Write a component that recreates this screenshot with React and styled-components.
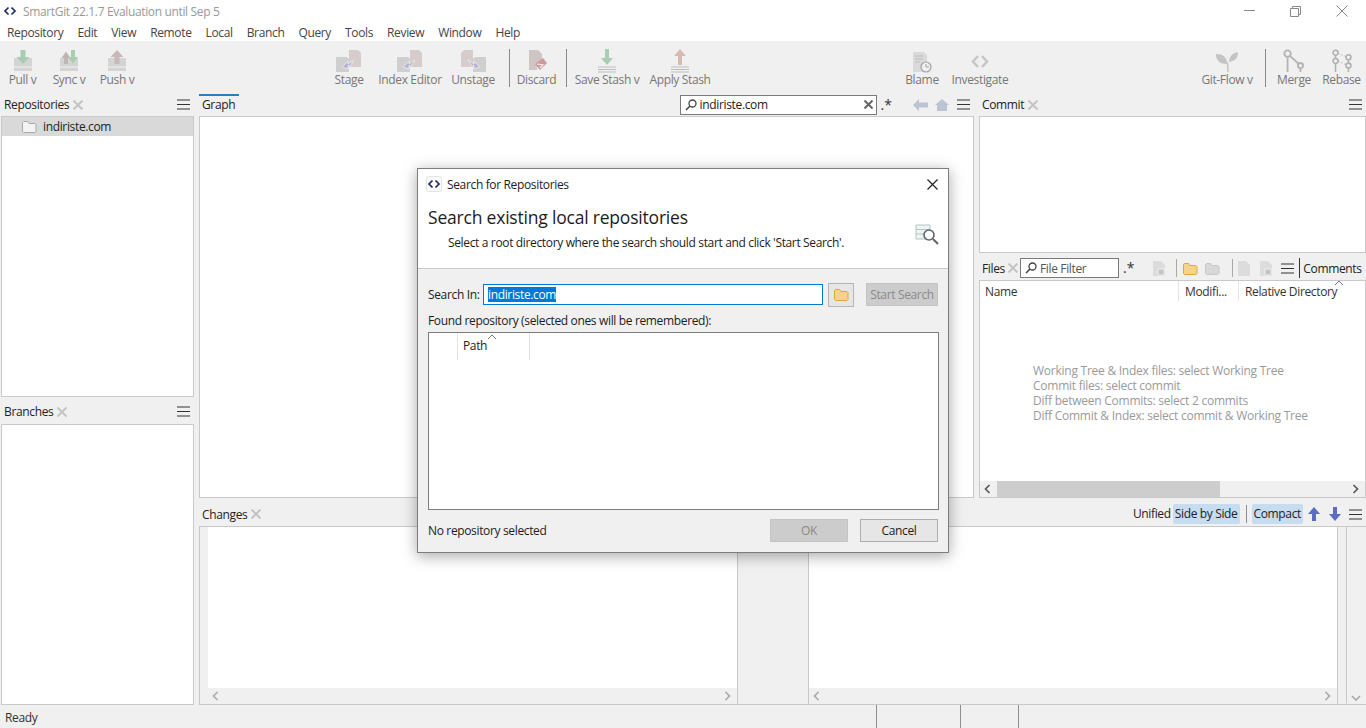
import React from 'react';
import styled, { createGlobalStyle } from 'styled-components';

const FONT = '"Open Sans", "Noto Sans", "Liberation Sans", sans-serif';

const GlobalStyle = createGlobalStyle`
  html, body { margin: 0; padding: 0; height: 100%; overflow: hidden; }
  body { font-family: ${FONT}; font-size: 12px; color: #1a1a1a; background: #f0f0f0; }
  * { box-sizing: border-box; }
`;

const Page = styled.div`
  position: relative;
  width: 1366px;
  height: 728px;
  display: flex;
  flex-direction: column;
  overflow: hidden;
  letter-spacing: -0.35px;
`;

/* title + menu */
const TitleBar = styled.div`
  height: 22px;
  background: #fff;
  display: flex;
  align-items: center;
  padding-left: 2px;
  color: #999;
`;
const TitleText = styled.span`
  margin-left: 5px;
`;
const WindowButtons = styled.div`
  margin-left: auto;
  display: flex;
  align-items: center;
  padding-right: 18px;
  gap: 35px;
`;
const MenuBar = styled.div`
  height: 19px;
  background: #fff;
  display: flex;
  align-items: center;
  padding: 2px 0 0 7px;
  gap: 14px;
  color: #444;
`;

/* toolbar */
const Toolbar = styled.div`
  height: 53px;
  background: #f0f0f0;
  display: flex;
  align-items: flex-start;
  padding-top: 8px;
`;
const ToolGroup = styled.div`
  display: flex;
  align-items: flex-start;
  margin-left: ${(p) => p.$ml || 0}px;
`;
const ToolButton = styled.div`
  width: ${(p) => p.$w}px;
  display: flex;
  flex-direction: column;
  align-items: center;
  color: #777;
  white-space: nowrap;
  svg { display: block; height: 24px; }
  span { margin-top: -2px; line-height: 17px; }
`;
const ToolSep = styled.div`
  width: 1px;
  height: 38px;
  margin: 0 ${(p) => p.$r || 0}px 0 ${(p) => p.$l || 0}px;
  background: #8a8a8a;
`;

/* workspace */
const Main = styled.div`
  flex: 1;
  min-height: 0;
  display: flex;
`;
const LeftColumn = styled.div`
  width: 199px;
  padding: 0 5px 0 1px;
  display: flex;
  flex-direction: column;
`;
const RightArea = styled.div`
  flex: 1;
  min-width: 0;
  display: flex;
  flex-direction: column;
`;
const TopRow = styled.div`
  height: 409px;
  flex: none;
  display: flex;
`;
const CenterColumn = styled.div`
  width: 775px;
  display: flex;
  flex-direction: column;
  padding-bottom: 5px;
`;
const SideColumn = styled.div`
  margin-left: 5px;
  flex: 1;
  min-width: 0;
  display: flex;
  flex-direction: column;
  padding-bottom: 5px;
`;
const PaneHeader = styled.div`
  height: ${(p) => p.$h || 22}px;
  flex: none;
  display: flex;
  align-items: center;
  padding: 0 4px ${(p) => (p.$flat ? 0 : 1)}px 3px;
  margin-top: ${(p) => p.$mt || 0}px;
  color: #222;
  position: relative;
`;
const ActiveMark = styled.div`
  position: absolute;
  left: 0;
  top: 0;
  width: 40px;
  height: 2px;
  background: #2e7cb8;
`;
const HeaderRight = styled.div`
  margin-left: auto;
  display: flex;
  align-items: center;
`;
const Box = styled.div`
  background: #fff;
  border: 1px solid #c9c9c9;
  flex: ${(p) => (p.$h ? 'none' : 1)};
  height: ${(p) => (p.$h ? `${p.$h}px` : 'auto')};
  min-height: 0;
  position: relative;
`;
const RepoRow = styled.div`
  height: 19px;
  background: #d9d9d9;
  display: flex;
  align-items: center;
  padding-left: 20px;
  gap: 6px;
  color: #222;
`;
const SearchField = styled.div`
  width: ${(p) => p.$w}px;
  height: 20px;
  flex: none;
  background: #fff;
  border: 1px solid #7a7a7a;
  display: flex;
  align-items: center;
  padding: 0 3px 0 4px;
  gap: 3px;
  color: ${(p) => (p.$muted ? '#555' : '#1a1a1a')};
`;
const RegexMark = styled.span`
  font-size: 14px;
  line-height: 14px;
  color: #333;
  margin: 0 ${(p) => p.$r}px 0 ${(p) => p.$l}px;
  letter-spacing: 0;
`;
const FieldClose = styled.span`
  margin-left: auto;
  display: flex;
`;
const IconSlot = styled.span`
  display: flex;
  margin-left: ${(p) => p.$ml || 0}px;
`;
const ThinSep = styled.span`
  width: 1px;
  height: ${(p) => p.$h || 18}px;
  background: ${(p) => p.$c || '#a8a8a8'};
  margin-left: ${(p) => p.$ml || 0}px;
`;

/* files table */
const FilesHead = styled.div`
  display: grid;
  grid-template-columns: 199px 60px 1fr;
  height: 20px;
  position: relative;
`;
const HeadCell = styled.div`
  padding-left: ${(p) => p.$pl || 6}px;
  border-right: ${(p) => (p.$last ? 0 : 1)}px solid #e5e5e5;
  white-space: nowrap;
  overflow: hidden;
  color: #333;
  line-height: 21px;
`;
const SortCaret = styled.span`
  position: absolute;
  right: ${(p) => p.$r}px;
  top: ${(p) => p.$t}px;
  display: flex;
`;
const HintBlock = styled.div`
  position: absolute;
  left: 53px;
  top: 82px;
  color: #9a9a9a;
  line-height: 15px;
  letter-spacing: -0.25px;
`;
const HScroll = styled.div`
  display: flex;
  align-items: center;
  height: 16px;
  background: #f0f0f0;
  position: ${(p) => (p.$overlay ? 'absolute' : 'static')};
  left: 0;
  right: 0;
  bottom: 0;
`;
const ScrollTrack = styled.div`
  flex: 1;
  height: 100%;
`;
const ScrollThumb = styled.div`
  width: ${(p) => p.$w}px;
  height: 100%;
  margin-left: ${(p) => p.$l}px;
  background: #cdcdcd;
`;
const Arrow = styled.span`
  width: 17px;
  flex: none;
  display: flex;
  justify-content: center;
`;

/* changes */
const ChangesBody = styled.div`
  flex: 1;
  min-height: 0;
  display: flex;
  border-top: 1px solid #c9c9c9;
  border-bottom: 1px solid #c9c9c9;
  background: #f0f0f0;
`;
const Gutter = styled.div`
  width: ${(p) => p.$w}px;
  flex: none;
  border-left: 1px solid #c9c9c9;
  display: flex;
  flex-direction: column;
  justify-content: flex-end;
  align-items: center;
`;
const DiffPane = styled.div`
  width: ${(p) => p.$w}px;
  flex: none;
  display: flex;
  flex-direction: column;
`;
const DiffWhite = styled.div`
  flex: 1;
  background: #fff;
`;
const DiffGap = styled.div`
  width: 72px;
  flex: none;
  border-left: 1px solid #c9c9c9;
  border-right: 1px solid #c9c9c9;
`;
const ModeLabel = styled.span`
  padding: 0 2px;
  height: 20px;
  line-height: 20px;
  border-radius: 2px;
  background: ${(p) => (p.$on ? '#c6dcf0' : 'transparent')};
  color: #222;
  margin-left: ${(p) => p.$ml || 0}px;
  white-space: nowrap;
`;

/* status */
const StatusBar = styled.div`
  height: 23px;
  flex: none;
  display: flex;
  align-items: stretch;
  padding-left: 5px;
  color: #333;
`;
const StatusText = styled.div`
  width: 871px;
  line-height: 26px;
`;
const StatusCell = styled.div`
  width: ${(p) => p.$w}px;
  border-left: 1px solid #8f8f8f;
`;

/* dialog */
const Dialog = styled.div`
  position: absolute;
  left: 417px;
  top: 168px;
  width: 532px;
  height: 385px;
  background: #f0f0f0;
  border: 1px solid #7d7d7d;
  box-shadow: 0 3px 14px rgba(0, 0, 0, 0.35);
  display: flex;
  flex-direction: column;
  color: #1c1c1c;
`;
const DialogTop = styled.div`
  height: 100px;
  flex: none;
  background: #fff;
  border-bottom: 1px solid #c8c8c8;
  position: relative;
  padding: 0 10px;
`;
const DialogTitle = styled.div`
  height: 30px;
  display: flex;
  align-items: center;
  gap: 5px;
  margin-left: -2px;
`;
const DialogClose = styled.span`
  margin-left: auto;
  display: flex;
`;
const Heading = styled.div`
  font-size: 17.5px;
  line-height: 24px;
  margin-top: 6px;
  letter-spacing: -0.2px;
`;
const SubHeading = styled.div`
  margin: 5px 0 0 20px;
  line-height: 17px;
`;
const TopIcon = styled.span`
  position: absolute;
  right: 9px;
  top: 55px;
  display: flex;
`;
const DialogBody = styled.div`
  flex: 1;
  min-height: 0;
  display: flex;
  flex-direction: column;
  padding: 13px 9px 10px 10px;
`;
const SearchRow = styled.div`
  display: flex;
  align-items: center;
  height: 25px;
  flex: none;
`;
const RowLabel = styled.span`
  width: 55px;
  flex: none;
`;
const PathInput = styled.div`
  width: 340px;
  height: 21px;
  border: 1px solid #0078d7;
  background: #fff;
  display: flex;
  align-items: center;
  padding-left: 4px;
  flex: none;
`;
const Selected = styled.span`
  background: #0078d7;
  color: #fff;
  line-height: 15px;
`;
const FolderButton = styled.div`
  width: 26px;
  height: 24px;
  margin-left: 5px;
  border: 1px solid #b5b5b5;
  background: #e6e6e6;
  display: flex;
  align-items: center;
  justify-content: center;
`;
const DialogButton = styled.div`
  width: ${(p) => p.$w}px;
  height: 23px;
  display: flex;
  align-items: center;
  justify-content: center;
  flex: none;
  margin-left: ${(p) => p.$ml || 0}px;
  background: ${(p) => (p.$disabled ? '#cccccc' : '#e6e6e6')};
  border: 1px solid ${(p) => (p.$disabled ? '#c4c4c4' : '#adadad')};
  color: ${(p) => (p.$disabled ? '#8a8a8a' : '#1c1c1c')};
`;
const FoundLabel = styled.div`
  margin-top: 5px;
  line-height: 17px;
`;
const ResultTable = styled.div`
  margin-top: 3px;
  height: 178px;
  flex: none;
  background: #fff;
  border: 1px solid #7d7d7d;
  position: relative;
`;
const ResultHead = styled.div`
  display: grid;
  grid-template-columns: 29px 72px;
  height: 27px;
`;
const ResultCell = styled.div`
  border-right: 1px solid #e3e3e3;
  padding-left: 5px;
  line-height: 26px;
`;
const DialogFooter = styled.div`
  display: flex;
  align-items: center;
  margin: 9px 1px 0 0;
  height: 23px;
  flex: none;
`;
const FooterText = styled.span`
  margin-right: auto;
`;

/* icons */
const Svg = ({ w, h, children, ...rest }) => (
  <svg width={w} height={h} viewBox={`0 0 ${w} ${h}`} fill="none" {...rest}>
    {children}
  </svg>
);

const AppLogo = ({ boxed }) => (
  <Svg w={16} h={16}>
    {boxed && <rect x="0.5" y="0.5" width="15" height="15" rx="2" fill="#fafafa" stroke="#e4e4e4" />}
    <path d="M6.5 4.5 3 8l3.5 3.5M9.5 4.5 13 8l-3.5 3.5" stroke="#1f2a60" strokeWidth="1.7" />
  </Svg>
);
const CloseX = ({ s = 10, c = '#c4c4c4', sw = 2 }) => (
  <Svg w={s} h={s}>
    <path d={`M0.5 0.5 ${s - 0.5} ${s - 0.5}M${s - 0.5} 0.5 0.5 ${s - 0.5}`} stroke={c} strokeWidth={sw} />
  </Svg>
);
const Burger = () => (
  <Svg w={13} h={11}>
    <path d="M0 1h13M0 5.500h13M0 10h13" stroke="#333" strokeWidth="1" />
  </Svg>
);
const Lens = () => (
  <Svg w={12} h={12}>
    <circle cx="7.500" cy="4.500" r="3.500" stroke="#444" strokeWidth="1.300" />
    <path d="M5 7 1 11" stroke="#444" strokeWidth="1.600" />
  </Svg>
);
const Folder = ({ c = '#f5d489', s = '#d9a93f', w = 15, h = 13 }) => (
  <Svg w={w} h={h}>
    <path d={`M0.5 ${h - 1.5}V2.5l1-1h4l1.5 2h${w - 9}l1 1v${h - 6}l-1 1H1.5z`} fill={c} stroke={s} />
  </Svg>
);
const Chevron = ({ dir, c = '#a9a9a9' }) => {
  const d = {
    left: 'M5.500 1 1.500 5l4 4',
    right: 'M1.500 1l4 4-4 4',
    up: 'M1 6l4-4 4 4',
    down: 'M1 2l4 4 4-4',
  }[dir];
  return (
    <Svg w={10} h={10}>
      <path d={d} stroke={c} strokeWidth="1.600" />
    </Svg>
  );
};
const Caret = () => (
  <Svg w={10} h={6}>
    <path d="M1 5 5 1l4 4" stroke="#777" strokeWidth="1" />
  </Svg>
);

const Tray = ({ children }) => (
  <Svg w={28} h={24}>
    <path d="M5 9h18v13H5z" fill="#d4d4d4" />
    <path d="M5 18h18" stroke="#f0f0f0" />
    {children}
  </Svg>
);
const PullIcon = () => (
  <Tray>
    <path d="M11.500 1h5v7h4l-6.500 7-6.500-7h4z" fill="#a9cdb0" />
  </Tray>
);
const SyncIcon = () => (
  <Tray>
    <path d="M6.500 9l4.500-6.500L15.500 9h-2.500v6H9V9z" fill="#c2b4b4" />
    <path d="M16 1h4v7h3l-5 6.500L13 8h3z" fill="#a9cdb0" />
  </Tray>
);
const PushIcon = () => (
  <Tray>
    <path d="M14 1l6.500 7h-4v7h-5V8h-4z" fill="#c9b8b8" />
  </Tray>
);
const DocPair = ({ arrow, flip }) => (
  <Svg w={28} h={24} style={flip ? { transform: 'scaleX(-1)' } : undefined}>
    <path d="M1 8h11l2 2v13H1z" fill="#cfcfcf" />
    <path d="M14 1h9l3 3v14H14z" fill="#d6cccc" />
    <path d="M7 18l6-6v3l6-4-5 8v-3l-1 1v3z" fill={arrow} stroke="#f0f0f0" strokeWidth="0.800" />
  </Svg>
);
const DiscardIcon = () => (
  <Svg w={24} h={24}>
    <path d="M4 1h9l4 4v7l-5 5v4H4z" fill="#cfc5c5" />
    <path d="M10 15l8-6 4 5-7 7z" fill="#d09a9a" />
    <path d="M12 15l6 1-3 3" stroke="#f0f0f0" strokeWidth="1.200" />
  </Svg>
);
const SaveStashIcon = () => (
  <Svg w={24} h={24}>
    <path d="M10 0h4v9h4l-6 7-6-7h4z" fill="#a9cdb0" />
    <path d="M3 18h18M3 20.500h18M3 23h18" stroke="#bdbdbd" />
  </Svg>
);
const ApplyStashIcon = () => (
  <Svg w={24} h={24}>
    <path d="M12 0l6 7h-4v9h-4V7H6z" fill="#d6bcae" />
    <path d="M3 18h18M3 20.500h18M3 23h18" stroke="#bdbdbd" />
  </Svg>
);
const BlameIcon = () => (
  <Svg w={24} h={24}>
    <path d="M3 3h11l3 3v17H3z" fill="#dadada" />
    <path d="M5 7h8M5 10h8M5 13h5" stroke="#bcbcbc" />
    <circle cx="16" cy="18" r="5" fill="#efefef" stroke="#a3a3a3" strokeWidth="1.200" />
    <path d="M16 15v3h3" stroke="#a3a3a3" />
  </Svg>
);
const InvestigateIcon = () => (
  <Svg w={24} h={24}>
    <path d="M10 7 5 12.500l5 5.500M14 7l5 5.500-5 5.500" stroke="#c6c6c6" strokeWidth="2.600" />
    <path d="M9.500 12.500h1" stroke="#c6c6c6" />
  </Svg>
);
const GitFlowIcon = () => (
  <Svg w={24} h={24}>
    <path d="M1 5c7 0 11 3 11 10-7 0-11-3-11-10z" fill="#c4c4c4" />
    <path d="M14 13c0-5 3-9 9-10 0 6-3 9-9 10z" fill="#c4c4c4" />
    <path d="M12 13c1 3 1 7 1 10" stroke="#c4c4c4" strokeWidth="1.500" />
  </Svg>
);
const MergeIcon = () => (
  <Svg w={26} h={26}>
    <circle cx="6" cy="5" r="3.500" stroke="#b4b4b4" strokeWidth="2" />
    <circle cx="20" cy="18" r="2.800" stroke="#b4b4b4" strokeWidth="2" />
    <path d="M6 9v16M8.500 7.500 18 16M20 21v4" stroke="#b4b4b4" strokeWidth="2" />
  </Svg>
);
const RebaseIcon = () => (
  <Svg w={26} h={26}>
    <circle cx="6" cy="4" r="2.700" stroke="#b0b0b0" strokeWidth="1.700" />
    <circle cx="6" cy="13" r="2.700" stroke="#b0b0b0" strokeWidth="1.700" />
    <circle cx="20" cy="9" r="2.700" stroke="#b0b0b0" strokeWidth="1.700" />
    <circle cx="20" cy="18" r="2.700" stroke="#b0b0b0" strokeWidth="1.700" />
    <path d="M6 7v3M6 16v9M20 12v3M20 21v4" stroke="#b0b0b0" strokeWidth="1.700" />
    <path d="M9 5l8 3M9 13l8 4" stroke="#b0b0b0" strokeDasharray="1.500 2" />
  </Svg>
);
const BackIcon = () => (
  <Svg w={15} h={12}>
    <path d="M0 6l6-6v3.500h9v5H6V12z" fill="#bcc4d4" />
  </Svg>
);
const HomeIcon = () => (
  <Svg w={14} h={12}>
    <path d="M7 0l7 6h-2v6H2V6H0z" fill="#bcc4d4" />
  </Svg>
);
const VArrow = ({ up }) => (
  <Svg w={12} h={14} style={up ? undefined : { transform: 'scaleY(-1)' }}>
    <path d="M6 0l6 7H8v7H4V7H0z" fill="#5a6cc4" />
  </Svg>
);
const SearchDocIcon = () => (
  <Svg w={24} h={22}>
    <path d="M1 1h14v14H1z" fill="#eef4f2" stroke="#b4c6c4" />
    <path d="M1 5.500h14M1 10h14" stroke="#b4c6c4" />
    <circle cx="14" cy="11" r="5" fill="#fff" stroke="#5e6468" strokeWidth="1.600" />
    <path d="M18 15l5 5" stroke="#5e6468" strokeWidth="2" />
  </Svg>
);
const SmallDoc = ({ c = '#dcdcdc', badge }) => (
  <Svg w={12} h={15}>
    <path d="M0 0h8l4 4v11H0z" fill={c} />
    {badge && <rect x="5" y="8" width="6" height="6" fill="#c4c4c4" stroke="#efefef" />}
  </Svg>
);

const menus = ['Repository', 'Edit', 'View', 'Remote', 'Local', 'Branch', 'Query', 'Tools', 'Review', 'Window', 'Help'];
const hints = [
  'Working Tree & Index files: select Working Tree',
  'Commit files: select commit',
  'Diff between Commits: select 2 commits',
  'Diff Commit & Index: select commit & Working Tree',
];

const Tool = ({ w, label, children }) => (
  <ToolButton $w={w}>
    {children}
    <span>{label}</span>
  </ToolButton>
);

const DiffScroll = () => (
  <HScroll>
    <Arrow><Chevron dir="left" /></Arrow>
    <ScrollTrack />
    <Arrow><Chevron dir="right" /></Arrow>
  </HScroll>
);

const App = () => {
  return (
    <Page>
      <GlobalStyle />
      <TitleBar>
        <AppLogo />
        <TitleText>SmartGit 22.1.7 Evaluation until Sep 5</TitleText>
        <WindowButtons>
          <Svg w={11} h={2}><path d="M0 .5h11" stroke="#888" /></Svg>
          <Svg w={11} h={11}>
            <path d="M.5 2.500h8v8h-8zM2.500 2.500v-2h8v8h-2" stroke="#888" />
          </Svg>
          <Svg w={12} h={12}><path d="M.5.500l11 11M11.500.500l-11 11" stroke="#888" /></Svg>
        </WindowButtons>
      </TitleBar>
      <MenuBar>
        {menus.map((m) => (
          <span key={m}>{m}</span>
        ))}
      </MenuBar>

      <Toolbar>
        <ToolGroup>
          <Tool w={45} label="Pull v"><PullIcon /></Tool>
          <Tool w={48} label="Sync v"><SyncIcon /></Tool>
          <Tool w={48} label="Push v"><PushIcon /></Tool>
        </ToolGroup>
        <ToolGroup $ml={183}>
          <Tool w={50} label="Stage"><DocPair arrow="#b9b4d2" /></Tool>
          <Tool w={72} label="Index Editor"><DocPair arrow="#b9b4d2" /></Tool>
          <Tool w={54} label="Unstage"><DocPair arrow="#b9b4d2" flip /></Tool>
          <ToolSep $l={9} $r={0} />
          <Tool w={53} label="Discard"><DiscardIcon /></Tool>
          <ToolSep $l={3} $r={4} />
          <Tool w={72} label="Save Stash v"><SaveStashIcon /></Tool>
          <Tool w={74} label="Apply Stash"><ApplyStashIcon /></Tool>
        </ToolGroup>
        <ToolGroup $ml={183}>
          <Tool w={44} label="Blame"><BlameIcon /></Tool>
          <Tool w={72} label="Investigate"><InvestigateIcon /></Tool>
        </ToolGroup>
        <ToolGroup $ml={181}>
          <Tool w={60} label="Git-Flow v"><GitFlowIcon /></Tool>
          <ToolSep $l={8} $r={5} />
          <Tool w={46} label="Merge"><MergeIcon /></Tool>
          <Tool w={49} label="Rebase"><RebaseIcon /></Tool>
        </ToolGroup>
      </Toolbar>

      <Main>
        <LeftColumn>
          <PaneHeader>
            Repositories
            <IconSlot $ml={4}><CloseX /></IconSlot>
            <HeaderRight><Burger /></HeaderRight>
          </PaneHeader>
          <Box $h={281}>
            <RepoRow>
              <Folder c="#f3f3f3" s="#a8a8a8" />
              <span>indiriste.com</span>
            </RepoRow>
          </Box>
          <PaneHeader $h={24} $mt={3}>
            Branches
            <IconSlot $ml={4}><CloseX /></IconSlot>
            <HeaderRight><Burger /></HeaderRight>
          </PaneHeader>
          <Box />
        </LeftColumn>

        <RightArea>
          <TopRow>
            <CenterColumn>
              <PaneHeader>
                <ActiveMark />
                Graph
                <HeaderRight>
                  <SearchField $w={197}>
                    <Lens />
                    indiriste.com
                    <FieldClose><CloseX c="#666" s={9} /></FieldClose>
                  </SearchField>
                  <RegexMark $l={4} $r={21}>.*</RegexMark>
                  <BackIcon />
                  <IconSlot $ml={7}><HomeIcon /></IconSlot>
                  <IconSlot $ml={8}><Burger /></IconSlot>
                </HeaderRight>
              </PaneHeader>
              <Box />
            </CenterColumn>
            <SideColumn>
              <PaneHeader>
                Commit
                <IconSlot $ml={4}><CloseX /></IconSlot>
                <HeaderRight><Burger /></HeaderRight>
              </PaneHeader>
              <Box $h={137} />
              <PaneHeader $h={24} $mt={3} $flat>
                Files
                <IconSlot $ml={3}><CloseX /></IconSlot>
                <IconSlot $ml={2} />
                <SearchField $w={99} $muted>
                  <Lens />
                  File Filter
                </SearchField>
                <RegexMark $l={4} $r={19}>.*</RegexMark>
                <SmallDoc badge />
                <ThinSep $ml={11} />
                <IconSlot $ml={6}><Folder /></IconSlot>
                <IconSlot $ml={7}><Folder c="#d8d8d8" s="#c8c8c8" /></IconSlot>
                <ThinSep $ml={12} />
                <IconSlot $ml={5}><SmallDoc /></IconSlot>
                <IconSlot $ml={10}><SmallDoc badge /></IconSlot>
                <IconSlot $ml={9}><Burger /></IconSlot>
                <ThinSep $ml={5} $h={20} $c="#333" />
                <IconSlot $ml={3}>Comments</IconSlot>
              </PaneHeader>
              <Box>
                <FilesHead>
                  <HeadCell $pl={5}>Name</HeadCell>
                  <HeadCell>Modifi...</HeadCell>
                  <HeadCell $last>Relative Directory</HeadCell>
                  <SortCaret $r={21} $t={-1}><Caret /></SortCaret>
                </FilesHead>
                <HintBlock>
                  {hints.map((h) => (
                    <div key={h}>{h}</div>
                  ))}
                </HintBlock>
                <HScroll $overlay>
                  <Arrow><Chevron dir="left" c="#555" /></Arrow>
                  <ScrollTrack>
                    <ScrollThumb $l={0} $w={223} />
                  </ScrollTrack>
                  <Arrow><Chevron dir="right" c="#555" /></Arrow>
                </HScroll>
              </Box>
            </SideColumn>
          </TopRow>

          <PaneHeader $h={23}>
            Changes
            <IconSlot $ml={4}><CloseX /></IconSlot>
            <HeaderRight>
              <ModeLabel>Unified</ModeLabel>
              <ModeLabel $on>Side by Side</ModeLabel>
              <ThinSep $ml={6} $h={18} $c="#8f8f8f" />
              <ModeLabel $on $ml={5}>Compact</ModeLabel>
              <IconSlot $ml={5}><VArrow up /></IconSlot>
              <IconSlot $ml={9}><VArrow /></IconSlot>
              <IconSlot $ml={8}><Burger /></IconSlot>
            </HeaderRight>
          </PaneHeader>
          <ChangesBody>
            <Gutter $w={9} />
            <DiffPane $w={529}>
              <DiffWhite />
              <DiffScroll />
            </DiffPane>
            <DiffGap />
            <DiffPane $w={528}>
              <DiffWhite />
              <DiffScroll />
            </DiffPane>
            <Gutter $w={9} />
            <Gutter $w={19}>
              <Chevron dir="down" />
            </Gutter>
          </ChangesBody>
        </RightArea>
      </Main>

      <StatusBar>
        <StatusText>Ready</StatusText>
        <StatusCell $w={84} />
        <StatusCell $w={58} />
        <StatusCell $w={348} />
      </StatusBar>

      <Dialog>
        <DialogTop>
          <DialogTitle>
            <AppLogo boxed />
            <span>Search for Repositories</span>
            <DialogClose><CloseX s={11} c="#222" sw={1.2} /></DialogClose>
          </DialogTitle>
          <Heading>Search existing local repositories</Heading>
          <SubHeading>Select a root directory where the search should start and click 'Start Search'.</SubHeading>
          <TopIcon><SearchDocIcon /></TopIcon>
        </DialogTop>
        <DialogBody>
          <SearchRow>
            <RowLabel>Search In:</RowLabel>
            <PathInput><Selected>indiriste.com</Selected></PathInput>
            <FolderButton><Folder /></FolderButton>
            <DialogButton $w={72} $ml={12} $disabled>Start Search</DialogButton>
          </SearchRow>
          <FoundLabel>Found repository (selected ones will be remembered):</FoundLabel>
          <ResultTable>
            <ResultHead>
              <ResultCell />
              <ResultCell>Path</ResultCell>
            </ResultHead>
            <SortCaret $r={441} $t={1}><Caret /></SortCaret>
          </ResultTable>
          <DialogFooter>
            <FooterText>No repository selected</FooterText>
            <DialogButton $w={78} $disabled>OK</DialogButton>
            <DialogButton $w={78} $ml={12}>Cancel</DialogButton>
          </DialogFooter>
        </DialogBody>
      </Dialog>
    </Page>
  );
};

export default App;
